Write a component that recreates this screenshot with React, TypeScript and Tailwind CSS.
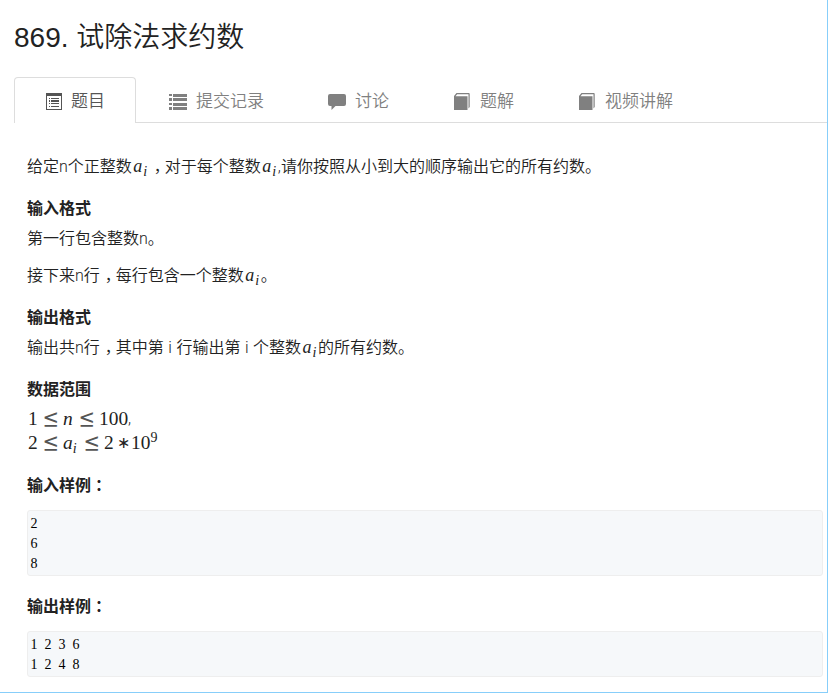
import type { ReactNode } from "react";

const ListAlt = () => (
  <svg width="17" height="17" viewBox="0 0 17 17" fill="#555" shapeRendering="crispEdges">
    <path fillRule="evenodd" d="M0 0h16v17H0zM1 3v13h14V3z" />
    <path d="M3 5h1v1H3zM3 7h1v2H3zM3 10h1v1H3zM3 13h1v1H3zM5 5h8v1H5zM5 7h8v2H5zM5 10h8v1H5zM5 13h8v1H5z" />
  </svg>
);

const List = () => (
  <svg width="18" height="17" viewBox="0 0 18 17" fill="#808080" shapeRendering="crispEdges">
    <path d="M0 1h3v2H0zM0 5h3v3H0zM0 10h3v2H0zM0 14h3v3H0zM4 1h14v3H4zM4 5h14v3H4zM4 10h14v3H4zM4 14h14v3H4z" />
  </svg>
);

const Comment = () => (
  <svg width="18" height="17" viewBox="0 0 18 17" fill="#808080">
    <path d="M2 1h14q2 0 2 2v8q0 2-2 2H7.500L3.500 17v-4H2q-2 0-2-2V3q0-2 2-2z" />
  </svg>
);

const Book = () => (
  <svg width="17" height="17" viewBox="0 0 17 17" fill="#808080">
    <path d="M1 3 3.500 0h12.300q.900 0 .900.900v13.200L15.500 15.500V1.200H4.200L2.500 3.200H14.500V17H1z" />
  </svg>
);

const Tab = ({ icon, label, className }: { icon: ReactNode; label: string; className: string }) => (
  <div className={`flex h-[46px] shrink-0 items-center border-b border-[#ddd] pt-[3px] text-[17px] text-[#808080] ${className}`}>
    <span className="w-[27px] shrink-0">{icon}</span>
    <span className="leading-6">{label}</span>
  </div>
);

const Ai = () => (
  <span className="inline-block h-5 w-[17px] whitespace-nowrap pl-[1.500px] align-baseline font-['Liberation_Serif',serif] text-[18px] italic leading-5">
    a<sub className="pl-px text-[14px] leading-none">i</sub>
  </span>
);

const Comma = () => <span className="inline-block w-4 pl-[5px] [font-feature-settings:'halt']">，</span>;
const Colon = () => <span className="inline-block w-4 pl-1 [font-feature-settings:'halt']">：</span>;

const LessEqual = () => (
  <span className="inline-block w-5 shrink-0 origin-center translate-y-px scale-y-120 font-['DejaVu_Math_TeX_Gyre','Liberation_Serif',serif] text-[#555]">≤</span>
);

const Heading = ({ children, className = "" }: { children: ReactNode; className?: string }) => (
  <h4 className={`h-6 text-[16px] font-bold leading-6 ${className}`}>{children}</h4>
);

const Line = ({ children, className = "" }: { children: ReactNode; className?: string }) => (
  <p className={`h-6 whitespace-nowrap text-[16px] leading-6 ${className}`}>{children}</p>
);

const Sample = ({ children, className }: { children: string; className: string }) => (
  <pre className={`w-[796px] rounded-[3px] border border-[#eee] bg-[#f6f8fa] pl-[2.500px] pt-[3px] font-['Liberation_Serif',serif] text-[14px] font-normal leading-5 text-black [word-spacing:3.5px] ${className}`}>
    {children}
  </pre>
);

const Token = ({ children, className }: { children: ReactNode; className: string }) => (
  <span className={`inline-block shrink-0 ${className}`}>{children}</span>
);

export default function App() {
  return (
    <main className="flex h-[693px] w-[828px] flex-col overflow-hidden border-b border-r border-[#87cefa] bg-white font-['Roboto','Noto_Sans_CJK_SC',sans-serif] font-[350] text-[#222]">
      <h1 className="ml-[14px] mt-[18px] h-10 font-['Liberation_Sans','Noto_Sans_CJK_SC',sans-serif] text-[28px] leading-10">869. 试除法求约数</h1>

      <nav className="mt-[19px] flex">
        <div className="w-[14px] shrink-0" />
        <div className="flex h-[46px] w-[122px] shrink-0 items-center rounded-t-[4px] border border-b-0 border-[#ddd] pl-[31px] pt-px text-[17px] text-[#555]">
          <span className="w-[25px]"><ListAlt /></span>
          <span className="leading-6">题目</span>
        </div>
        <Tab icon={<List />} label="提交记录" className="w-[160px] pl-[33px]" />
        <Tab icon={<Comment />} label="讨论" className="w-[125px] pl-[32px]" />
        <Tab icon={<Book />} label="题解" className="w-[125px] pl-[32px]" />
        <Tab icon={<Book />} label="视频讲解" className="w-[282px] pl-[32px]" />
      </nav>

      <article className="flex flex-col pl-[27px]">
        <Line className="mt-8">
          给定n个正整数<Ai /><Comma />对于每个整数<Ai />,请你按照从小到大的顺序输出它的所有约数。
        </Line>
        <Heading className="mt-[18px]">输入格式</Heading>
        <Line className="mt-[6px]">第一行包含整数n。</Line>
        <Line className="mt-[13px]">接下来n行<Comma />每行包含一个整数<Ai />。</Line>
        <Heading className="mt-[18px]">输出格式</Heading>
        <Line className="mt-[6px] [word-spacing:0.6px]">输出共n行<Comma />其中第 i 行输出第 i 个整数<Ai />的所有约数。</Line>
        <Heading className="mt-[18px]">数据范围</Heading>
        <div className="mb-px mt-[5px] pl-px font-['Liberation_Serif',serif] text-[19.4px] font-normal leading-6">
          <div className="flex h-6">
            <Token className="w-[15px]">1</Token>
            <LessEqual />
            <Token className="w-[16px] italic">n</Token>
            <LessEqual />
            <Token className="">100</Token>
            <span className="font-['Roboto',sans-serif] text-[16px] font-light">,</span>
          </div>
          <div className="flex h-6">
            <Token className="w-[15px]">2</Token>
            <LessEqual />
            <Token className="w-[21px] italic">a<sub className="text-[14px] leading-none">i</sub></Token>
            <LessEqual />
            <Token className="w-[13px]">2</Token>
            <Token className="w-[14px] text-[16px]">∗</Token>
            <Token className="">10<sup className="text-[14px] leading-none">9</sup></Token>
          </div>
        </div>
        <Heading className="mt-[18px]">输入样例<Colon /></Heading>
        <Sample className="mt-[12px] h-[66px]">{"2\n6\n8"}</Sample>
        <Heading className="mt-[19px]">输出样例<Colon /></Heading>
        <Sample className="mt-[12px] h-[46px]">{"1 2 3 6\n1 2 4 8"}</Sample>
      </article>
    </main>
  );
}
